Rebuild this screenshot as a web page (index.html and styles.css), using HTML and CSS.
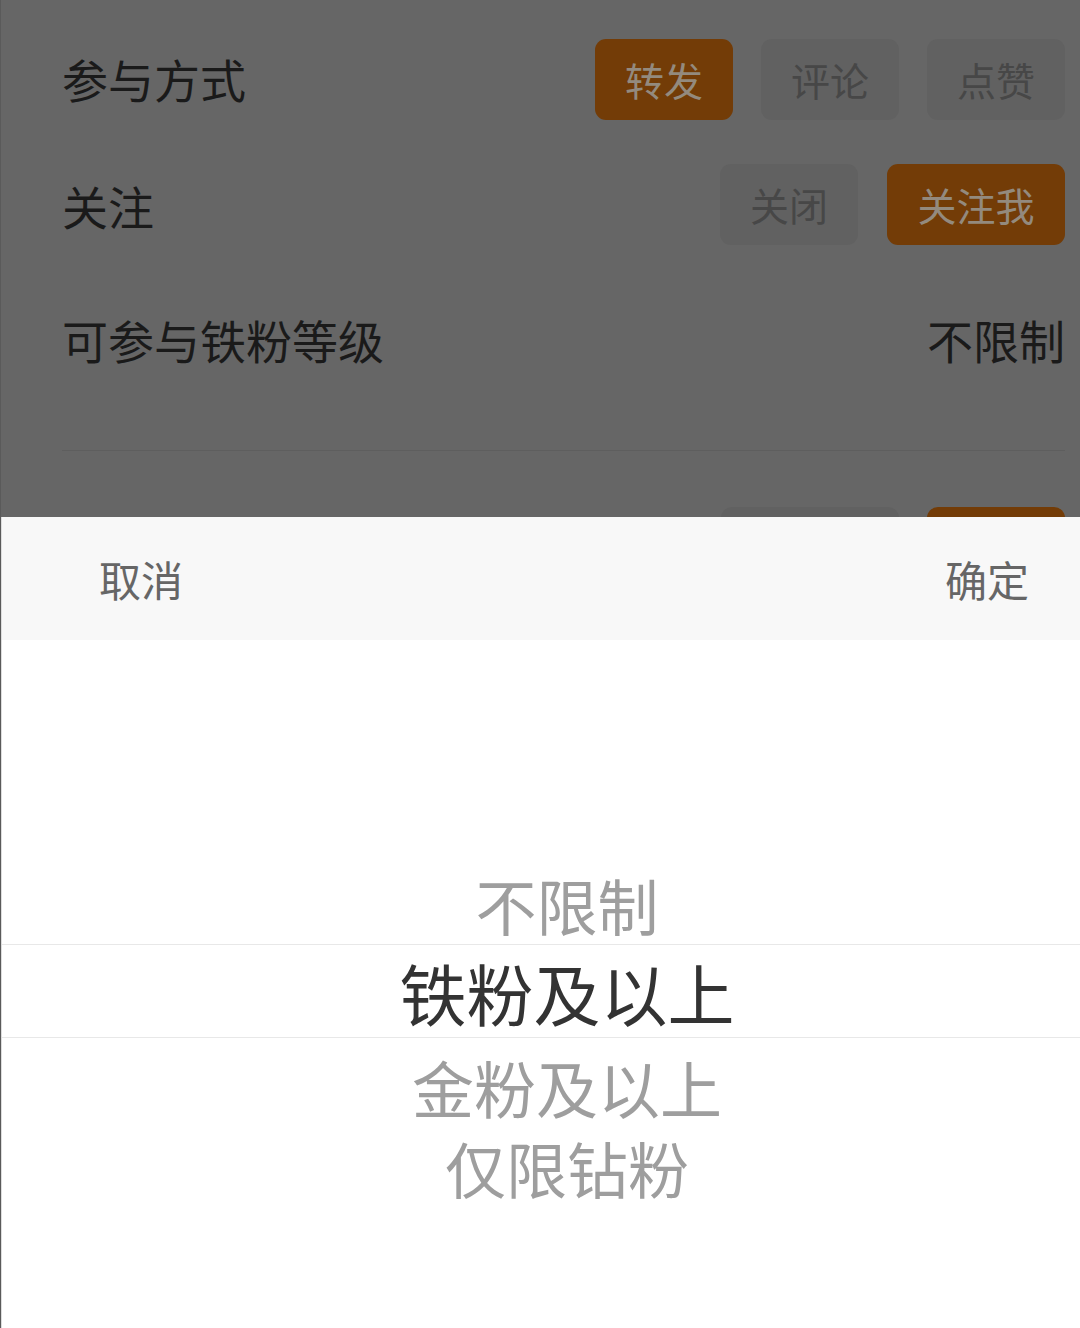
FILE: index.html
```html
<!DOCTYPE html>
<html lang="zh-CN">
<head>
<meta charset="utf-8">
<title>铁粉等级</title>
<link rel="stylesheet" href="styles.css">
</head>
<body>
<div class="screen">
  <div class="form">
    <div class="row row-1">
      <div class="label">参与方式</div>
      <div class="btns">
        <div class="btn on">转发</div>
        <div class="btn">评论</div>
        <div class="btn">点赞</div>
      </div>
    </div>
    <div class="row row-2">
      <div class="label">关注</div>
      <div class="btns">
        <div class="btn">关闭</div>
        <div class="btn on wide">关注我</div>
      </div>
    </div>
    <div class="row row-3">
      <div class="label">可参与铁粉等级</div>
      <div class="value">不限制</div>
    </div>
    <div class="divider"></div>
    <div class="row row-4">
      <div class="label"></div>
      <div class="btns">
        <div class="btn wider"></div>
        <div class="btn on"></div>
      </div>
    </div>
  </div>

  <div class="sheet">
    <div class="sheet-head">
      <span class="action">取消</span>
      <span class="action">确定</span>
    </div>
    <div class="picker">
      <div class="opt opt-1">不限制</div>
      <div class="opt opt-sel">铁粉及以上</div>
      <div class="opt opt-3">金粉及以上</div>
      <div class="opt opt-4">仅限钻粉</div>
    </div>
  </div>
</div>
</body>
</html>
```

FILE: styles.css
```css
* { box-sizing: border-box; }
html, body {
  margin: 0;
  padding: 0;
}
body {
  width: 1080px;
  height: 1328px;
  overflow: hidden;
  font-family: "Noto Sans CJK SC", "Noto Sans", sans-serif;
  background: #666666;
}
.screen {
  position: relative;
  width: 1080px;
  height: 1328px;
  background: #666666;
  border-left: 1px solid #5a5a5a;
}
.form {
  display: flex;
  flex-direction: column;
  padding: 0 15px 0 61px;
}
.row {
  display: flex;
  align-items: center;
  justify-content: space-between;
  height: 80px;
  line-height: 1;
}
.row-1 { margin-top: 38px; }
.row-2 { margin-top: 46px; height: 81px; }
.row-3 { margin-top: 54px; }
.row-4 { margin-top: 56px; }
.label {
  font-size: 46px;
  color: #1a1a1a;
}
.value {
  font-size: 46px;
  color: #1a1a1a;
}
.btns {
  display: flex;
  gap: 28px;
  height: 100%;
}
.btn {
  width: 138px;
  height: 100%;
  border-radius: 11px;
  background: #616161;
  color: #474747;
  font-size: 39px;
  display: flex;
  align-items: center;
  justify-content: center;
}
.row-1 .btn { height: 81px; margin-top: 1px; }
.btn.on {
  background: #733c07;
  color: #938a7e;
}
.btn.wide { width: 178px; }
.btn.wider { width: 178px; }
.row-2 .btns { gap: 29px; }
.divider {
  margin-top: 71px;
  height: 1px;
  background: #5e5e5e;
}

.sheet {
  position: absolute;
  left: 0;
  right: 0;
  top: 517px;
  bottom: 0;
  background: #ffffff;
  border-left: 1px solid #dddddd;
  display: flex;
  flex-direction: column;
}
.sheet-head {
  height: 123px;
  background: #f8f8f8;
  display: flex;
  align-items: center;
  justify-content: space-between;
  padding: 0 51px 0 97px;
}
.action {
  font-size: 42px;
  line-height: 1;
  color: #666666;
}
.picker {
  display: flex;
  flex-direction: column;
  padding-top: 224px;
}
.opt {
  display: flex;
  align-items: center;
  justify-content: center;
  padding-left: 52px;
  line-height: 1;
  font-size: 61px;
  color: #9e9e9e;
}
.opt-1 { height: 80px; }
.opt-sel {
  height: 94px;
  font-size: 67px;
  color: #333333;
  border-top: 1px solid #e8e8e8;
  border-bottom: 1px solid #e8e8e8;
}
.opt-3 { height: 98px; font-size: 62px; }
.opt-4 { height: 62px; font-size: 61px; }
```
